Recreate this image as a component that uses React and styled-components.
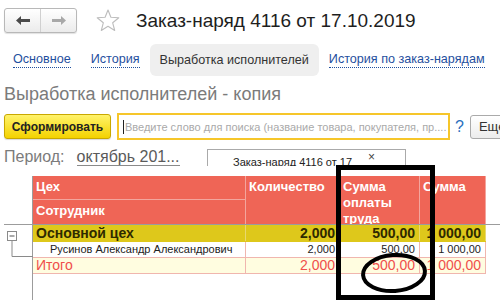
import React from 'react';
import styled, { createGlobalStyle } from 'styled-components';

const Global = createGlobalStyle`
  html, body { margin: 0; padding: 0; background: #fff; }
  body { font-family: "Liberation Sans", Arial, sans-serif; width: 500px; height: 300px; overflow: hidden; }
  * { box-sizing: border-box; }
`;

const Page = styled.div`
  position: relative;
  width: 500px;
  height: 300px;
  overflow: hidden;
  background: #fff;
`;

const TopBar = styled.div`
  display: flex;
  align-items: center;
  height: 33px;
  padding: 8px 0 0 4px;
`;

const NavGroup = styled.div`
  display: flex;
  width: 73px;
  height: 25px;
  border: 1px solid #b8b8b8;
  border-radius: 3px;
  background: linear-gradient(#ffffff, #ebebeb);
  box-shadow: 0 1px 1px rgba(0, 0, 0, 0.12);
`;

const NavBtn = styled.div`
  flex: 1;
  display: flex;
  align-items: center;
  justify-content: center;
  & + & { border-left: 1px solid #d0d0d0; }
`;

const StarWrap = styled.div`
  margin-left: 19px;
  display: flex;
  align-items: center;
`;

const Title = styled.div`
  margin-left: 16px;
  font-size: 19px;
  color: #1e1e1e;
  line-height: 24px;
  white-space: nowrap;
`;

const Tabs = styled.div`
  display: flex;
  margin-top: 11px;
  height: 32px;
  padding-left: 3px;
`;

const Tab = styled.div`
  flex: none;
  white-space: nowrap;
  display: flex;
  align-items: center;
  padding: 0 10px;
  font-size: 12.6px;
  border-radius: 6px;
  background: ${p => (p.$active ? '#efefef' : 'transparent')};
  color: ${p => (p.$active ? '#333' : '#1f4f9e')};
`;

const TabLink = styled.span`
  border-bottom: 1px dotted #1f4f9e;
  line-height: 15px;
`;

const Heading = styled.div`
  margin: 8px 0 0 4px;
  font-size: 18px;
  line-height: 20px;
  color: #7b7b7b;
  white-space: nowrap;
`;

const CommandBar = styled.div`
  display: flex;
  align-items: center;
  margin-top: 8px;
  height: 29px;
  padding-left: 4px;
`;

const YellowButton = styled.div`
  flex: none;
  width: 107px;
  height: 25px;
  display: flex;
  align-items: center;
  justify-content: center;
  border: 1px solid #c9a800;
  border-radius: 3px;
  background: linear-gradient(#fff36a, #f4d200);
  font-size: 12px;
  font-weight: bold;
  color: #222;
  box-shadow: 0 1px 1px rgba(0, 0, 0, 0.15);
`;

const Search = styled.div`
  flex: none;
  margin-left: 6px;
  width: 333px;
  height: 27px;
  border: 2px solid #f6c62a;
  display: flex;
  align-items: center;
  padding-left: 4px;
  font-size: 11px;
  color: #a9a9a9;
  white-space: nowrap;
  overflow: hidden;
`;

const Caret = styled.span`
  display: inline-block;
  width: 1px;
  height: 14px;
  background: #222;
  margin-right: 1px;
`;

const Help = styled.div`
  flex: none;
  margin-left: 5px;
  font-size: 16px;
  color: #2b6fbd;
`;

const MoreButton = styled.div`
  margin-left: 6px;
  flex: none;
  width: 70px;
  height: 24px;
  display: flex;
  align-items: center;
  padding-left: 8px;
  border: 1px solid #aaa;
  border-radius: 3px;
  background: linear-gradient(#fff, #ececec);
  font-size: 13px;
  color: #333;
`;

const PeriodRow = styled.div`
  display: flex;
  align-items: flex-start;
  margin-top: 6px;
  height: 22px;
  padding-left: 4px;
`;

const PeriodGroup = styled.div`
  flex: none;
  width: 203px;
  display: flex;
  white-space: nowrap;
`;

const PeriodLabel = styled.div`
  font-size: 16px;
  line-height: 20px;
  color: #7b7b7b;
`;

const PeriodLink = styled.span`
  margin-left: 12px;
  font-size: 16px;
  line-height: 18px;
  color: #5a5a5a;
  border-bottom: 1px solid #8a8a8a;
`;

const FilterBox = styled.div`
  position: relative;
  flex: none;
  margin-top: 2px;
  width: 199px;
  height: 17px;
  border: 1px solid #aaa;
  border-bottom: none;
  overflow: hidden;
  padding: 6px 0 0 25px;
  font-size: 11px;
  line-height: 13px;
  color: #222;
  white-space: nowrap;
`;

const Close = styled.span`
  position: absolute;
  left: 160px;
  top: 1px;
  font-size: 12px;
  color: #444;
`;

const TableArea = styled.div`
  margin-top: 7px;
  display: flex;
  flex-direction: column;
`;

const Band = styled.div`
  display: flex;
`;

const Gutter = styled.div`
  width: 33px;
  flex: none;
  border-right: 1px solid #9c9c9c;
  height: ${p => p.$h}px;
`;

const COLS = '213px 94px 80px 66px';

const HeaderGrid = styled.div`
  display: grid;
  grid-template-columns: ${COLS};
  grid-template-rows: 24px 24px;
  background: #ef6556;
  height: 48px;
`;

const HeadCell = styled.div`
  grid-row: ${p => p.$row || 'auto'};
  grid-column: ${p => p.$col || 'auto'};
  color: #fff;
  font-size: 13px;
  font-weight: bold;
  line-height: 16px;
  padding: 3px 3px 0 3px;
  border-right: 1px solid #f3a59d;
  border-bottom: ${p => (p.$split ? '1px solid #f3a59d' : 'none')};
`;

const Divider = styled.div`
  height: 1px;
  margin-left: 4px;
  background: #9c9c9c;
`;

const Rows = styled.div`
  display: flex;
  flex-direction: column;
`;

const Row = styled.div`
  display: grid;
  grid-template-columns: ${COLS};
  height: ${p => p.$h}px;
  background: ${p => p.$bg};
  color: ${p => p.$color};
  font-size: ${p => p.$size}px;
  font-weight: ${p => (p.$bold ? 'bold' : 'normal')};
  line-height: ${p => p.$h - 1}px;
  border-bottom: 1px solid ${p => p.$line};
`;

const Cell = styled.div`
  padding: ${p => (p.$num ? '0 4px 0 0' : `0 0 0 ${p.$indent || 3}px`)};
  text-align: ${p => (p.$num ? 'right' : 'left')};
  border-right: 1px solid ${p => p.$line};
  white-space: nowrap;
  overflow: hidden;
`;

const Frame = styled.div`
  position: absolute;
  left: 336px;
  top: 165px;
  width: 99px;
  height: 135px;
  border: 5px solid #000;
`;

const EllipseMark = styled.svg`
  position: absolute;
  left: 360px;
  top: 251px;
`;

const TreeSvg = styled.svg`
  display: block;
`;

const rows = [
  { name: 'Основной цех', q: '2,000', s: '500,00', t: '1 000,00', bg: '#dec81b', color: '#2e2a00', size: 14, bold: true, h: 17, line: '#dec81b', cellLine: '#e8d870' },
  { name: 'Русинов Александр Александрович', q: '2,000', s: '500,00', t: '1 000,00', bg: '#fff', color: '#222', size: 11, h: 16, indent: 17, line: '#f0b6ae', cellLine: '#f0b6ae' },
  { name: 'Итого', q: '2,000', s: '500,00', t: '1 000,00', bg: '#fffde0', color: '#ef4f4c', size: 14, h: 16, line: '#f0b6ae', cellLine: '#f0b6ae' },
];

export default function App() {
  return (
    <>
      <Global />
      <Page>
        <TopBar>
          <NavGroup>
            <NavBtn>
              <svg width="14" height="9" viewBox="0 0 14 9">
                <path d="M0 4.5 L5 0 L5 3 L14 3 L14 6 L5 6 L5 9 Z" fill="#4a4a4a" />
              </svg>
            </NavBtn>
            <NavBtn>
              <svg width="14" height="9" viewBox="0 0 14 9">
                <path d="M14 4.5 L9 0 L9 3 L0 3 L0 6 L9 6 L9 9 Z" fill="#a8a8a8" />
              </svg>
            </NavBtn>
          </NavGroup>
          <StarWrap>
            <svg width="24" height="23" viewBox="0 0 24 23">
              <path d="M12 1 L14.9 8.3 L22.8 8.8 L16.7 13.8 L18.7 21.5 L12 17.2 L5.3 21.5 L7.3 13.8 L1.2 8.8 L9.1 8.3 Z" fill="none" stroke="#bdbdbd" strokeWidth="1.1" strokeLinejoin="round" />
            </svg>
          </StarWrap>
          <Title>Заказ-наряд 4116 от 17.10.2019</Title>
        </TopBar>

        <Tabs>
          <Tab><TabLink>Основное</TabLink></Tab>
          <Tab><TabLink>История</TabLink></Tab>
          <Tab $active>Выработка исполнителей</Tab>
          <Tab><TabLink>История по заказ-нарядам</TabLink></Tab>
        </Tabs>

        <Heading>Выработка исполнителей - копия</Heading>

        <CommandBar>
          <YellowButton>Сформировать</YellowButton>
          <Search>
            <Caret />Введите слово для поиска (название товара, покупателя, пр....
          </Search>
          <Help>?</Help>
          <MoreButton>Еще</MoreButton>
        </CommandBar>

        <PeriodRow>
          <PeriodGroup>
            <PeriodLabel>Период:</PeriodLabel>
            <PeriodLabel><PeriodLink>октябрь 201...</PeriodLink></PeriodLabel>
          </PeriodGroup>
          <FilterBox>
            Заказ-наряд 4116 от 17
            <Close>×</Close>
          </FilterBox>
        </PeriodRow>

        <TableArea>
          <Band>
            <Gutter $h={48} />
            <HeaderGrid>
              <HeadCell $row="1" $col="1" $split>Цех</HeadCell>
              <HeadCell $row="2" $col="1">Сотрудник</HeadCell>
              <HeadCell $row="1 / 3" $col="2">Количество</HeadCell>
              <HeadCell $row="1 / 3" $col="3">Сумма оплаты труда</HeadCell>
              <HeadCell $row="1 / 3" $col="4">Сумма</HeadCell>
            </HeaderGrid>
          </Band>
          <Divider />
          <Band>
            <Gutter $h={80}>
              <TreeSvg width="33" height="40" viewBox="0 0 33 40">
                <rect x="7.5" y="6.5" width="9" height="9" fill="#fff" stroke="#8a8a8a" />
                <line x1="9.5" y1="11" x2="14.5" y2="11" stroke="#555" />
                <path d="M12 15.5 V31.5 H33" fill="none" stroke="#8a8a8a" />
              </TreeSvg>
            </Gutter>
            <Rows>
              {rows.map((r, i) => (
                <Row key={i} $h={r.h} $bg={r.bg} $color={r.color} $size={r.size} $bold={r.bold} $line={r.line}>
                  <Cell $line={r.cellLine} $indent={r.indent}>{r.name}</Cell>
                  <Cell $num $line={r.cellLine}>{r.q}</Cell>
                  <Cell $num $line={r.cellLine}>{r.s}</Cell>
                  <Cell $num $line={r.cellLine}>{r.t}</Cell>
                </Row>
              ))}
            </Rows>
          </Band>
        </TableArea>

        <Frame />
        <EllipseMark width="70" height="46" viewBox="0 0 70 46">
          <ellipse cx="34" cy="22" rx="31" ry="18" fill="none" stroke="#000" strokeWidth="4" transform="rotate(-4 34 22)" />
        </EllipseMark>
      </Page>
    </>
  );
}
